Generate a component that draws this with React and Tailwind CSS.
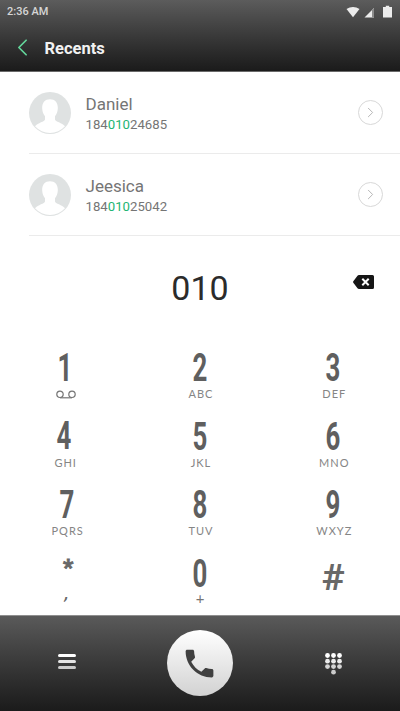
import { ChevronLeft, ChevronRight } from 'lucide-react';
import clsx from 'clsx';

const contacts = [
  { name: 'Daniel', number: ['184', '010', '24685'] },
  { name: 'Jeesica', number: ['184', '010', '25042'] },
];

const keys = [
  { digit: '1', voicemail: true },
  { digit: '2', letters: 'ABC' },
  { digit: '3', letters: 'DEF' },
  { digit: '4', letters: 'GHI' },
  { digit: '5', letters: 'JKL' },
  { digit: '6', letters: 'MNO' },
  { digit: '7', letters: 'PQRS' },
  { digit: '8', letters: 'TUV' },
  { digit: '9', letters: 'WXYZ' },
  { digit: '*', letters: ',' },
  { digit: '0', letters: '+' },
  { digit: '#' },
];

function StatusBar() {
  return (
    <div className="flex h-[23px] items-center justify-between pl-[7px] pr-[8px]">
      <span className="text-[11px] font-medium leading-[22px] text-[#d6d6d6]">2:36 AM</span>
      <svg width="47" height="14" viewBox="0 0 47 14" fill="#ececec">
        <path d="M1.5 4C5.5 1.2 10.5 1.2 14.5 4L8 12.2Z" />
        <path d="M29 3V12.5H19.5Z" />
        <path d="M27 5L29 3V12.5H27Z" fill="#8c8c8c" />
        <path d="M38 2h2.8V0.8h3.4V2H47v10.6H38Z" />
      </svg>
    </div>
  );
}

function Header() {
  return (
    <header className="h-[72px] shrink-0 border-b border-[#6a6a6a] bg-linear-to-b from-[#5c5c5c] to-[#1b1b1b]">
      <StatusBar />
      <div className="flex h-[49px] items-center pl-[8px]">
        <button aria-label="Back" className="flex w-[36.5px]">
          <ChevronLeft size={29} strokeWidth={1.4} className="text-[#63d69b]" />
        </button>
        <h1 className="pt-[3px] text-[16.5px] font-bold text-[#f2f2f2]">Recents</h1>
      </div>
    </header>
  );
}

function Avatar() {
  return (
    <svg width="42" height="42" viewBox="0 0 42 42">
      <circle cx="21" cy="21" r="21" fill="#dfe2e2" />
      <path
        d="M21 7.2C15.8 7.2 12.9 11 13.2 16.5C13.4 20 14.2 22 16 24.2V27.6C15.8 29.6 8.8 31 6 34.3A20.3 20.3 0 0 0 36 34.3C33.2 31 26.2 29.6 26 27.6V24.2C27.8 22 28.6 20 28.8 16.5C29.1 11 26.2 7.2 21 7.2Z"
        fill="#fff"
      />
    </svg>
  );
}

function ContactRow({ name, number }) {
  return (
    <li className="ml-[29px] flex h-[82px] items-center border-b border-[#ebebeb] pr-[17px]">
      <Avatar />
      <div className="ml-[14.5px] flex-1 pt-[3px]">
        <div className="text-[17px] leading-[21px] text-[#757575]">{name}</div>
        <div className="text-[13.2px] leading-[20px] text-[#757575]">
          {number[0]}
          <span className="text-[#22b573]">{number[1]}</span>
          {number[2]}
        </div>
      </div>
      <button aria-label="Details" className="flex size-[25px] items-center justify-center rounded-full border border-[#d8d8d8]">
        <ChevronRight size={17} strokeWidth={1.4} className="text-[#b5b5b5]" />
      </button>
    </li>
  );
}

function DialedNumber() {
  return (
    <div className="grid h-[104px] shrink-0 grid-cols-[1fr_auto_1fr] items-center">
      <span />
      <span className="pb-px text-[34px] leading-none text-[#2b2b2b]">010</span>
      <button aria-label="Delete" className="mr-[26px] mb-[12px] justify-self-end">
        <svg width="21" height="14" viewBox="0 0 21 14">
          <path d="M6 0H19.5Q21 0 21 1.5V12.5Q21 14 19.5 14H6Q5 14 4.5 13.2L0.3 7.7Q-0.1 7 0.3 6.3L4.5 0.8Q5 0 6 0Z" fill="#161616" />
          <path d="M9.3 3.8L15.7 10.2M15.7 3.8L9.3 10.2" stroke="#fff" strokeWidth="2" />
        </svg>
      </button>
    </div>
  );
}

function Key({ digit, letters, voicemail }) {
  if (digit === '#') {
    return (
      <button className="flex justify-center pt-[4px] text-[37px] font-semibold leading-[40px] text-[#686868]">
        <span className="h-[40px] scale-x-[1.05]">#</span>
      </button>
    );
  }
  if (digit === '*') {
    return (
      <button className="flex flex-col items-center text-[#686868]">
        <span className="h-[32px] pl-[3px] text-[22px] font-black leading-[28px] [-webkit-text-stroke:0.8px_#686868]">*</span>
        <span className="h-[14px] -skew-x-12 text-[18px] font-medium leading-[14px]">{letters}</span>
      </button>
    );
  }
  return (
    <button className="flex flex-col items-center text-[#5f5f5f]">
      <span
        className={clsx(
          'h-[40px] scale-x-[0.68] text-[38px] font-bold leading-[40px]',
          digit === '1' && 'mr-[4px]',
          digit === '4' && 'mr-[5px] -translate-y-px'
        )}
      >
        {digit}
      </span>
      {voicemail && (
        <svg width="20" height="9" viewBox="0 0 20 9" fill="none" stroke="#757575" strokeWidth="1.2" className="mt-[2px] mr-[1px]">
          <circle cx="4" cy="4.3" r="3.2" />
          <circle cx="16" cy="4.3" r="3.2" />
          <path d="M4 7.8H16" />
        </svg>
      )}
      {letters && (
        <span
          className={clsx(
            "font-['Lato',sans-serif] leading-[12px]",
            digit === '0' ? '-mt-[2px] text-[15px] text-[#757575]' : 'pl-[2px] text-[11px] tracking-[1px] text-[#858585]',
            digit === '4' && 'mr-[4px]'
          )}
        >
          {letters}
        </span>
      )}
    </button>
  );
}

function BottomBar() {
  return (
    <footer className="grid h-[96px] shrink-0 grid-cols-3 place-items-center border-t border-[#8f8f8f] bg-linear-to-b from-[#5a5a5a] to-[#1b1b1b]">
      <button aria-label="Menu" className="flex w-[18px] flex-col gap-[3.5px] -mt-[4px]">
        <span className="h-[2.6px] rounded-full bg-white" />
        <span className="h-[2.6px] rounded-full bg-[#e4e4e4]" />
        <span className="h-[2.6px] rounded-full bg-[#cbcbcb]" />
      </button>
      <button aria-label="Call" className="-mt-px flex size-[66px] items-center justify-center rounded-full bg-linear-to-b from-white to-[#d2d2d2]">
        <svg width="37" height="37" viewBox="0 0 24 24" fill="#404040">
          <path d="M6.62 10.79c1.44 2.83 3.76 5.14 6.59 6.59l2.2-2.2c.27-.27.67-.36 1.02-.24 1.12.37 2.33.57 3.57.57.55 0 1 .45 1 1V20c0 .55-.45 1-1 1-9.39 0-17-7.61-17-17 0-.55.45-1 1-1h3.5c.55 0 1 .45 1 1 0 1.25.2 2.45.57 3.57.11.35.03.74-.25 1.02l-2.2 2.2z" />
        </svg>
      </button>
      <button aria-label="Keypad">
        <svg width="17" height="22" viewBox="0 0 17 22">
          {[2.5, 8.2, 13.6].map((y, i) =>
            [2.5, 8.5, 14.5].map((x) => (
              <circle key={`${x}-${y}`} cx={x} cy={y} r="2.4" fill={['#fff', '#ececec', '#d6d6d6'][i]} />
            ))
          )}
          <circle cx="8.5" cy="19.2" r="2.4" fill="#cbcbcb" />
        </svg>
      </button>
    </footer>
  );
}

export default function App() {
  return (
    <div className="flex h-[711px] w-[400px] flex-col overflow-hidden bg-white font-['Roboto',sans-serif]">
      <Header />
      <ul className="shrink-0">
        {contacts.map((c) => (
          <ContactRow key={c.name} {...c} />
        ))}
      </ul>
      <DialedNumber />
      <div className="grid flex-1 grid-cols-3 grid-rows-[68.5px_68.5px_68.5px_61px] content-start pt-[8px]">
        {keys.map((k) => (
          <Key key={k.digit} {...k} />
        ))}
      </div>
      <BottomBar />
    </div>
  );
}
